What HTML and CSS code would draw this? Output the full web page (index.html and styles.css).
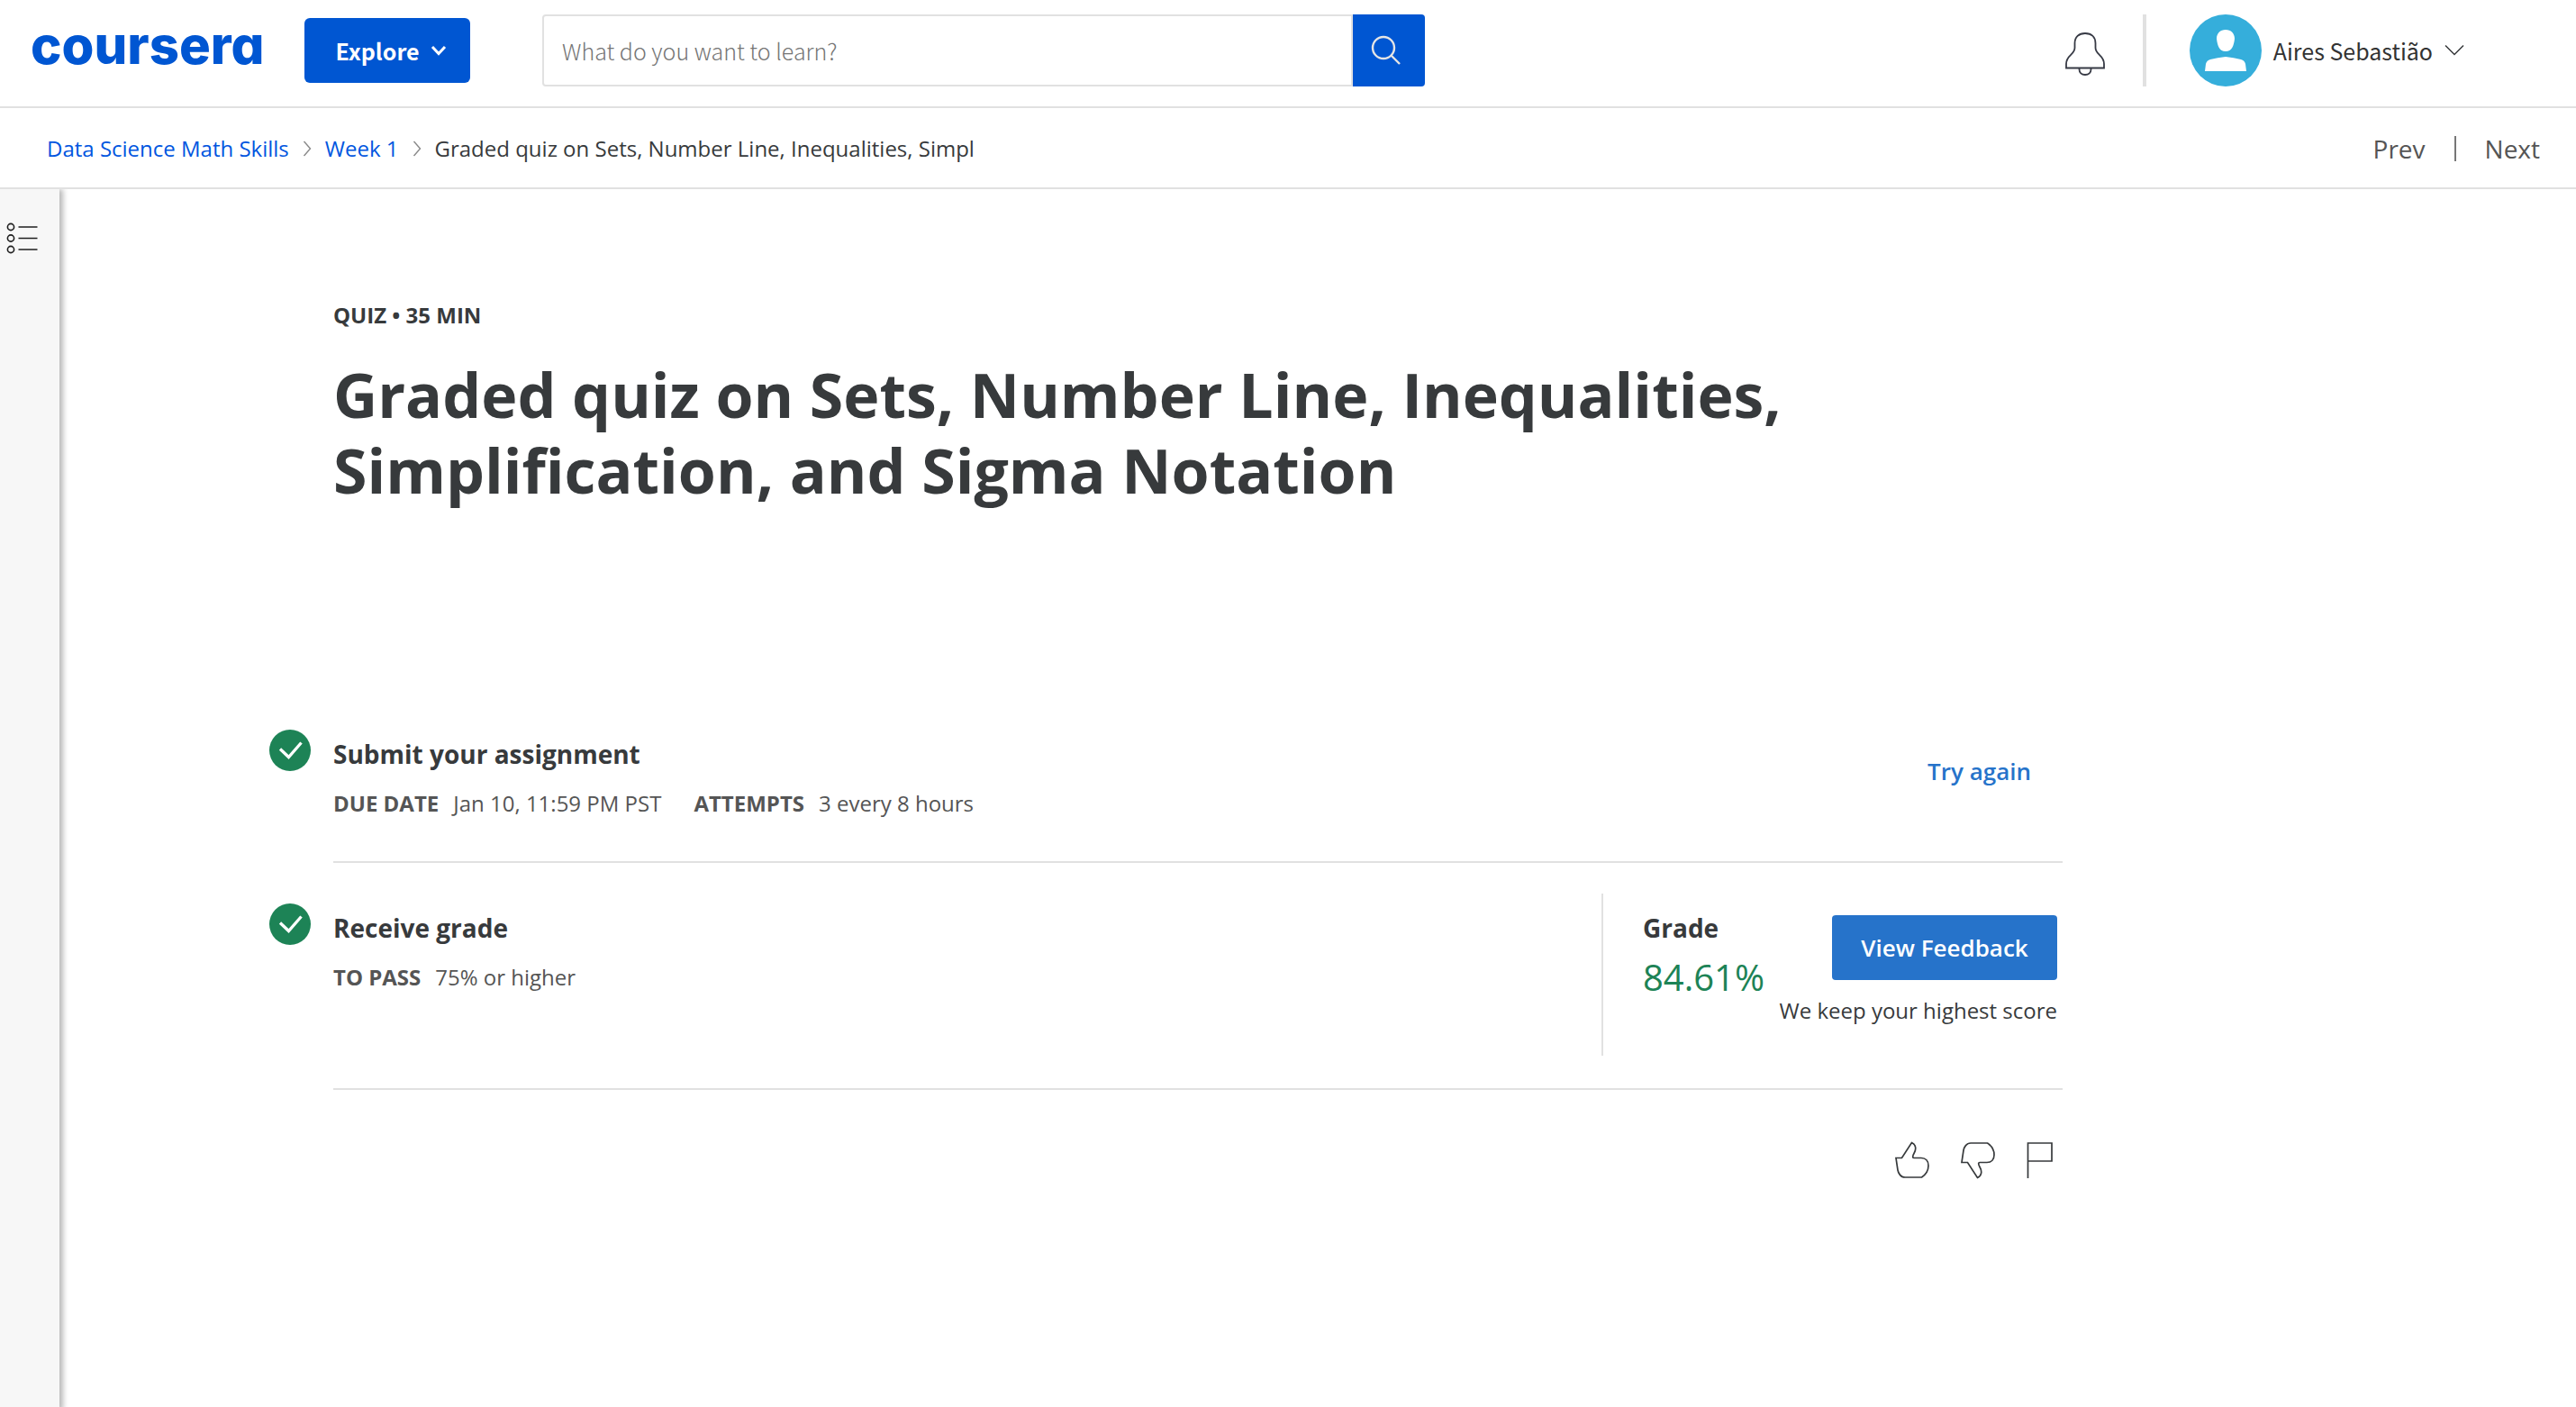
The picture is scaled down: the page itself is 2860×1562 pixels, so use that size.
FILE: index.html
```html
<!DOCTYPE html>
<html lang="en">
<head>
<meta charset="utf-8">
<title>Graded quiz on Sets, Number Line, Inequalities, Simplification, and Sigma Notation | Coursera</title>
<link rel="stylesheet" href="styles.css">
</head>
<body>
<header class="topbar">
  <a class="logo" href="#">coursera</a>
  <button class="explore" type="button">Explore
    <svg width="18" height="14" viewBox="0 0 18 14" aria-hidden="true"><path d="M2 3L9 10.500L16 3" fill="none" stroke="currentColor" stroke-width="3"/></svg>
  </button>
  <form class="search" role="search">
    <input class="search-input" type="text" aria-label="Search" placeholder="What do you want to learn?">
    <button class="search-button" type="submit" aria-label="Submit search">
      <svg width="34" height="34" viewBox="0 0 34 34" aria-hidden="true"><g fill="none" stroke="#e5e5e5" stroke-width="2.400"><circle cx="14" cy="14" r="12"/><path d="M22.500 22.500L32 32"/></g></svg>
    </button>
  </form>
  <div class="account">
    <button class="bell" type="button" aria-label="Notifications">
      <svg width="44" height="48" viewBox="0 0 44 48" aria-hidden="true"><path d="M1 39.500V35C1 25 10.500 25 10.500 17V12C10.500 5 15 1 22 1S33.500 5 33.500 12V17C33.500 25 43 25 43 35V39.500ZM15.500 40V41C15.500 44.500 18 47 22 47S28.500 44.500 28.500 41V40" fill="none" stroke="#373a45" stroke-width="1.800"/></svg>
    </button>
    <span class="account-rule"></span>
    <button class="profile" type="button">
      <svg width="80" height="80" viewBox="0 0 80 80" aria-hidden="true"><circle cx="40" cy="40" r="40" fill="#35aedb"/><path d="M40 17C46 17 50 21 50 27C49 35 47 41 40 41S31 35 30 27C30 21 34 17 40 17ZM40 47Q49 48 57 50Q61 51 62 55L63 63H17L18 55Q19 51 23 50Q31 48 40 47Z" fill="#fff"/></svg>
      <span class="profile-name">Aires Sebastião</span>
      <svg width="22" height="14" viewBox="0 0 22 14" aria-hidden="true"><path d="M1 1.500L11 11.500L21 1.500" fill="none" stroke="#373a3c" stroke-width="1.500"/></svg>
    </button>
  </div>
</header>
<div class="subbar">
  <nav class="crumbs" aria-label="Breadcrumb">
    <a href="#">Data Science Math Skills</a>
    <svg width="10" height="18" viewBox="0 0 10 18" aria-hidden="true"><path d="M1.500 1L8.500 9L1.500 17" fill="none" stroke="#888" stroke-width="1.400"/></svg>
    <a href="#">Week 1</a>
    <svg width="10" height="18" viewBox="0 0 10 18" aria-hidden="true"><path d="M1.500 1L8.500 9L1.500 17" fill="none" stroke="#888" stroke-width="1.400"/></svg>
    <span>Graded quiz on Sets, Number Line, Inequalities, Simpl</span>
  </nav>
  <nav class="pager" aria-label="Lesson">
    <a href="#">Prev</a>
    <span class="pager-rule"></span>
    <a href="#">Next</a>
  </nav>
</div>
<div class="workspace">
  <aside class="rail">
    <button class="rail-button" type="button" aria-label="Show course outline">
      <svg width="36" height="36" viewBox="0 0 36 36" aria-hidden="true"><g fill="none" stroke="#1f1f1f" stroke-width="1.600"><circle cx="5" cy="5" r="3.600"/><circle cx="5" cy="17.500" r="3.600"/><circle cx="5" cy="30" r="3.600"/><path d="M13.500 5H34.500M13.500 17.500H34.500M13.500 30H34.500"/></g></svg>
    </button>
  </aside>
  <main class="content">
    <p class="kind">QUIZ • 35 MIN</p>
    <h1>Graded quiz on Sets, Number Line, Inequalities, Simplification, and Sigma Notation</h1>
    <section class="step">
      <svg class="check" width="46" height="46" viewBox="0 0 46 46" aria-hidden="true"><circle cx="23" cy="23" r="23" fill="#1d8356"/><path d="M12 21.500L21.500 30.500L35.500 14.500" fill="none" stroke="#fff" stroke-width="3.300"/></svg>
      <div class="step-body">
        <h2>Submit your assignment</h2>
        <dl class="facts">
          <div><dt>DUE DATE</dt><dd>Jan 10, 11:59 PM PST</dd></div>
          <div><dt>ATTEMPTS</dt><dd>3 every 8 hours</dd></div>
        </dl>
      </div>
      <button class="retry" type="button">Try again</button>
    </section>
    <section class="step step-grade">
      <svg class="check" width="46" height="46" viewBox="0 0 46 46" aria-hidden="true"><circle cx="23" cy="23" r="23" fill="#1d8356"/><path d="M12 21.500L21.500 30.500L35.500 14.500" fill="none" stroke="#fff" stroke-width="3.300"/></svg>
      <div class="step-body">
        <h2>Receive grade</h2>
        <dl class="facts">
          <div><dt>TO PASS</dt><dd>75% or higher</dd></div>
        </dl>
      </div>
      <div class="result">
        <div>
          <h2>Grade</h2>
          <p class="score">84.61%</p>
        </div>
        <div class="feedback">
          <button class="feedback-button" type="button">View Feedback</button>
          <p class="note">We keep your highest score</p>
        </div>
      </div>
    </section>
    <div class="reactions">
      <button type="button" aria-label="Like"><svg width="38" height="42" viewBox="0 0 38 42" aria-hidden="true"><path d="M1 18.500H7.500L18.500 1.500C23 3.500 24 8.500 21 13.500C19 17 19.500 18.500 21 18.500H29C34 18.500 37 22 37 27C37 33 34 37 29.500 40H11C6 40 3.500 35 3 32Z" fill="none" stroke="#373a3c" stroke-width="1.700"/></svg></button>
      <button type="button" aria-label="Dislike"><svg width="38" height="42" viewBox="0 0 38 42" aria-hidden="true"><path d="M1 23.500H7.500L18.500 40.500C23 38.500 24 33.500 21 28.500C19 25 19.500 23.500 21 23.500H29C34 23.500 37 20 37 15C37 9 34 5 29.500 2H11C6 2 3.500 7 3 10Z" fill="none" stroke="#373a3c" stroke-width="1.700"/></svg></button>
      <button type="button" aria-label="Report an issue"><svg width="30" height="42" viewBox="0 0 30 42" aria-hidden="true"><path d="M1.500 41V2H28V22H1.500" fill="none" stroke="#373a3c" stroke-width="1.700"/></svg></button>
    </div>
  </main>
</div>
</body>
</html>
```
FILE: styles.css
```css
* { box-sizing: border-box; }
body {
  margin: 0;
  min-height: 100vh;
  display: flex;
  flex-direction: column;
  background: #fff;
  color: #373a3c;
  font-family: "Open Sans", sans-serif;
  font-size: 24px;
  line-height: 36px;
}
h1, h2, p, dl, dd { margin: 0; }
a { text-decoration: none; }
svg { display: block; flex: none; }
button {
  padding: 0;
  border: 0;
  background: none;
  color: inherit;
  font: inherit;
  cursor: pointer;
}

.topbar {
  display: flex;
  align-items: center;
  height: 120px;
  padding: 0 124px 6px 34px;
  border-bottom: 2px solid #e1e1e1;
}
.logo {
  width: 304px;
  padding-bottom: 12px;
  color: #0056d2;
  font: 800 58px/72px Inter, sans-serif;
  font-feature-settings: "cv11";
}
.explore, .search-input, .profile { font-family: "Noto Sans CJK SC", sans-serif; }
.explore {
  display: flex;
  align-items: center;
  justify-content: center;
  gap: 12px;
  width: 184px;
  height: 72px;
  margin-right: 80px;
  padding-left: 8px;
  border-radius: 6px;
  background: #0056d2;
  color: #fff;
  font-size: 25px;
  font-weight: 700;
}
.search { display: flex; width: 980px; height: 80px; }
.search-input {
  flex: 1;
  min-width: 0;
  padding: 0 20px;
  border: 2px solid #e1e1e1;
  border-radius: 4px 0 0 4px;
  color: #373a3c;
  font-size: 25px;
}
.search-input::placeholder { color: #757575; opacity: 1; font-weight: 300; }
.search-button {
  width: 80px;
  padding-left: 20px;
  border-radius: 0 4px 4px 0;
  background: #0056d2;
}
.account { display: flex; align-items: center; margin-left: auto; }
.bell { padding-top: 8px; }
.account-rule { width: 4px; height: 80px; margin: 0 48px 0 42px; background: #e1e1e1; }
.profile { display: flex; align-items: center; gap: 13px; font-size: 25px; color: #333; }

.subbar {
  display: flex;
  align-items: center;
  justify-content: space-between;
  height: 90px;
  padding: 2px 40px 0 52px;
  border-bottom: 2px solid #e1e1e1;
}
.crumbs { display: flex; align-items: center; gap: 15px; }
.crumbs a { color: #0156e0; }
.pager { display: flex; align-items: center; gap: 32px; font-size: 28px; }
.pager a { color: #555; }
.pager-rule { width: 2px; height: 28px; background: #777; }

.workspace { display: flex; flex: 1; }
.rail {
  width: 66px;
  padding: 37px 0 0 7px;
  background: #f7f7f7;
  box-shadow: 2px 2px 6px 2px rgba(0, 0, 0, .28);
  clip-path: inset(0 -12px 0 0);
}
.content { width: 2224px; padding: 122px 0 0 304px; }
.kind { font-weight: 700; }
h1 { margin: 28px 0 246px; font-size: 68px; line-height: 84px; }
h2 { font-size: 28px; line-height: 38px; }
.step {
  display: flex;
  align-items: flex-start;
  padding-bottom: 46px;
  border-bottom: 2px solid #e1e1e1;
}
.check { margin: 0 25px 0 -71px; }
.step-body { flex: 1; padding-top: 8px; }
.facts { display: flex; gap: 36px; margin-top: 18px; color: #555; }
.facts div { display: flex; gap: 16px; }
.facts dt { font-weight: 700; }
.facts dd { font-weight: 400; }
.retry { margin: 28px 35px 0 0; color: #2673ca; font-size: 26px; font-weight: 600; }
.step-grade { padding: 34px 0 36px; }
.step-grade .check { margin-top: 11px; }
.step-grade .step-body { padding-top: 19px; }
.result {
  display: flex;
  justify-content: space-between;
  width: 512px;
  height: 180px;
  padding: 19px 6px 0 44px;
  border-left: 2px solid #e1e1e1;
}
.score { margin-top: 8px; color: #1d8356; font-size: 40px; line-height: 56px; font-weight: 400; }
.feedback { padding-top: 5px; text-align: right; }
.feedback-button {
  width: 250px;
  height: 72px;
  border-radius: 4px;
  background: #2673ca;
  color: #fff;
  font-size: 26px;
  font-weight: 600;
}
.note { margin-top: 16px; }
.reactions { display: flex; justify-content: flex-end; gap: 35px; padding: 57px 10px 60px 0; }
```
